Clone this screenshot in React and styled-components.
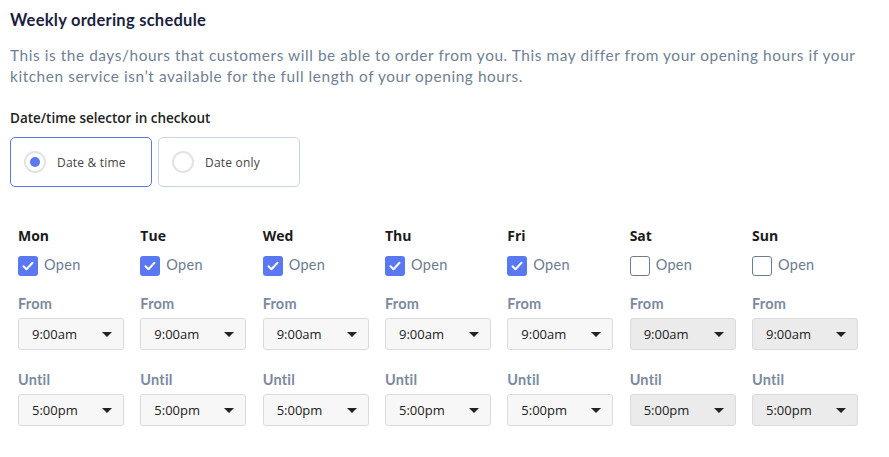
import React from 'react';
import styled, { createGlobalStyle } from 'styled-components';

const GlobalStyle = createGlobalStyle`
  body {
    margin: 0;
    background: #fff;
    font-family: "Open Sans", sans-serif;
  }
`;

const Page = styled.div`
  padding: 10px 10px 0 10px;
  width: 869px;
`;

const Title = styled.h2`
  margin: 0;
  font-family: Lato, "Open Sans", sans-serif;
  font-weight: 700;
  font-size: 16.5px;
  letter-spacing: 0.25px;
  line-height: 20px;
  color: #1d1f40;
`;

const Description = styled.p`
  margin: 15px 0 0 0;
  font-family: Lato, "Open Sans", sans-serif;
  font-size: 15.4px;
  letter-spacing: 0.57px;
  line-height: 21px;
  color: #6f7f95;
  width: 862px;
`;

const SubHeading = styled.div`
  margin-top: 22px;
  font-weight: 600;
  font-size: 13.5px;
  line-height: 18px;
  color: #222;
`;

const RadioRow = styled.div`
  display: flex;
  gap: 6px;
  margin-top: 10px;
`;

const RadioCard = styled.label`
  box-sizing: border-box;
  width: 142px;
  height: 50px;
  display: flex;
  align-items: center;
  gap: 11px;
  padding-left: 13px;
  border: 1px solid ${(p) => (p.$active ? '#5a78ea' : '#c8d5e2')};
  border-radius: 5px;
  font-size: 12px;
  letter-spacing: 0.2px;
  color: #444;
  cursor: pointer;
`;

const RadioCircle = styled.span`
  box-sizing: border-box;
  width: 22px;
  height: 22px;
  border-radius: 50%;
  border: 2px solid #e3e3e3;
  display: flex;
  align-items: center;
  justify-content: center;
  &::after {
    content: '';
    display: ${(p) => (p.$active ? 'block' : 'none')};
    width: 10px;
    height: 10px;
    border-radius: 50%;
    background: #5a78f0;
  }
`;

const Days = styled.div`
  display: grid;
  grid-template-columns: repeat(7, 106px);
  column-gap: 16.33px;
  margin-top: 39px;
  margin-left: 8px;
`;

const Day = styled.div`
  display: flex;
  flex-direction: column;
`;

const DayName = styled.div`
  font-weight: 700;
  font-size: 14px;
  line-height: 20px;
  color: #1b1b1b;
`;

const OpenRow = styled.label`
  display: flex;
  align-items: center;
  gap: 6px;
  margin-top: 10px;
  height: 20px;
  font-family: Lato, "Open Sans", sans-serif;
  font-size: 14.5px;
  letter-spacing: 0.3px;
  line-height: 18px;
  color: #6c7b90;
  & > span:last-child {
    margin-top: -3px;
  }
`;

const Box = styled.span`
  box-sizing: border-box;
  width: 20px;
  height: 20px;
  border-radius: 3px;
  display: flex;
  align-items: center;
  justify-content: center;
  background: ${(p) => (p.$checked ? '#5a78f2' : '#fff')};
  border: ${(p) => (p.$checked ? 'none' : '1px solid #6e7c8f')};
`;

const FieldLabel = styled.div`
  margin-top: ${(p) => p.$top}px;
  font-family: Lato, "Open Sans", sans-serif;
  font-weight: 700;
  font-size: 14.5px;
  letter-spacing: 0.2px;
  line-height: 20px;
  color: #7b8aa0;
`;

const Select = styled.div`
  box-sizing: border-box;
  margin-top: 4px;
  height: 32px;
  display: flex;
  align-items: center;
  justify-content: space-between;
  padding: 0 11px 0 13px;
  border: 1px solid #dadada;
  border-radius: 3px;
  background: ${(p) => (p.$disabled ? '#ebebeb' : '#f7f7f7')};
  font-size: 13px;
  color: #222;
`;

const Caret = () => (
  <svg width="10" height="5" viewBox="0 0 10 5">
    <path d="M0 0h10L5 5z" fill="#222" />
  </svg>
);

const Check = () => (
  <svg width="12" height="10" viewBox="0 0 12 10">
    <path d="M1.5 5.2l3 3L10.5 1.8" fill="none" stroke="#fff" strokeWidth="2" strokeLinecap="round" strokeLinejoin="round" />
  </svg>
);

const days = [
  { name: 'Mon', open: true },
  { name: 'Tue', open: true },
  { name: 'Wed', open: true },
  { name: 'Thu', open: true },
  { name: 'Fri', open: true },
  { name: 'Sat', open: false },
  { name: 'Sun', open: false }
];

export default function App () {
  return (
    <Page>
      <GlobalStyle />
      <Title>Weekly ordering schedule</Title>
      <Description>
        This is the days/hours that customers will be able to order from you. This may differ from your opening hours if your kitchen service isn’t available for the full length of your opening hours.
      </Description>
      <SubHeading>Date/time selector in checkout</SubHeading>
      <RadioRow>
        <RadioCard $active>
          <RadioCircle $active />
          Date &amp; time
        </RadioCard>
        <RadioCard>
          <RadioCircle />
          Date only
        </RadioCard>
      </RadioRow>
      <Days>
        {days.map((d) => (
          <Day key={d.name}>
            <DayName>{d.name}</DayName>
            <OpenRow>
              <Box $checked={d.open}>{d.open && <Check />}</Box>
              <span>Open</span>
            </OpenRow>
            <FieldLabel $top={18}>From</FieldLabel>
            <Select $disabled={!d.open}>
              9:00am
              <Caret />
            </Select>
            <FieldLabel $top={20}>Until</FieldLabel>
            <Select $disabled={!d.open}>
              5:00pm
              <Caret />
            </Select>
          </Day>
        ))}
      </Days>
    </Page>
  );
}
